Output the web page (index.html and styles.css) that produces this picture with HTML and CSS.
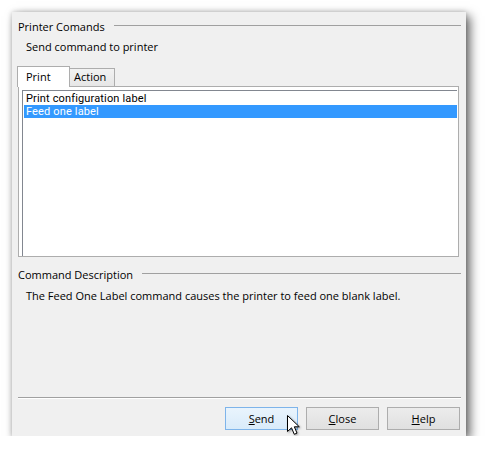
FILE: index.html
```html
<!DOCTYPE html>
<html lang="en">
<head>
<meta charset="utf-8">
<title>Printer Comands</title>
<link rel="stylesheet" href="styles.css">
</head>
<body>
<div class="window">
  <div class="group-title first"><span>Printer Comands</span><span class="rule"></span></div>
  <div class="subtitle">Send command to printer</div>
  <div class="tabs">
    <div class="tab-strip">
      <div class="tab active">Print</div>
      <div class="tab">Action</div>
    </div>
    <div class="tab-panel">
      <div class="listbox">
        <div class="item">Print configuration label</div>
        <div class="item selected">Feed one label</div>
      </div>
    </div>
  </div>
  <div class="group-title second"><span>Command Description</span><span class="rule"></span></div>
  <div class="desc">The Feed One Label command causes the printer to feed one blank label.</div>
  <div class="spacer"></div>
  <div class="separator"></div>
  <div class="buttons">
    <div class="btn default"><span><u>S</u>end</span>
      <svg class="cursor" width="14" height="21" viewBox="0 0 14 21"><path d="M0.5 0.5 L0.5 16.5 L4.5 12.8 L7.3 19.3 L10 18.1 L7.3 11.8 L12.3 11.8 Z" fill="#fff" stroke="#000" stroke-width="1" stroke-linejoin="miter"/></svg>
    </div>
    <div class="btn"><span><u>C</u>lose</span></div>
    <div class="btn"><span><u>H</u>elp</span></div>
  </div>
</div>
</body>
</html>
```
FILE: styles.css
```css
html, body {
  margin: 0;
  padding: 0;
  background: #ffffff;
}
body {
  font-family: "Open Sans", "Noto Sans", sans-serif;
  font-size: 11px;
  color: #000;
}
.window {
  box-sizing: border-box;
  margin: 12px 0 0 12px;
  width: 454px;
  height: 424px;
  background: #f0f0f0;
  padding: 7px 6px 6px 6px;
  display: flex;
  flex-direction: column;
  box-shadow: 0 0 5px rgba(0,0,0,0.18), 4px 4px 10px rgba(0,0,0,0.6);
}
.group-title {
  display: flex;
  align-items: center;
  height: 15px;
  line-height: 15px;
}
.group-title .rule {
  flex: 1;
  height: 1px;
  background: #a0a0a0;
  margin-left: 9px;
  margin-right: -1px;
  position: relative;
  top: -1px;
}
.group-title.second {
  margin-top: 10px;
}
.subtitle {
  margin-top: 5px;
  line-height: 15px;
  padding-left: 8px;
}
.tabs {
  margin-top: 12px;
}
.tab-strip {
  display: flex;
  align-items: flex-end;
  height: 20px;
}
.tab {
  box-sizing: border-box;
  height: 18px;
  width: 46px;
  border: 1px solid #adadad;
  border-bottom: none;
  background: linear-gradient(#f2f2f2, #e6e6e6);
  line-height: 16px;
  padding-left: 4px;
  margin-left: -1px;
}
.tab.active {
  position: relative;
  z-index: 1;
  height: 21px;
  width: 53px;
  margin-left: -1px;
  margin-bottom: -1px;
  background: #ffffff;
  padding-left: 8px;
  line-height: 19px;
}
.tab-panel {
  box-sizing: border-box;
  width: 441px;
  height: 171px;
  border: 1px solid #adadad;
  background: #ffffff;
  padding: 3px 1px 0 3px;
}
.listbox {
  box-sizing: border-box;
  height: 166px;
  border-top: 1px solid #828790;
  border-left: 1px solid #828790;
  padding: 1px 0 0 1px;
}
.item {
  height: 13px;
  line-height: 13px;
  padding-left: 2px;
  white-space: nowrap;
  font-family: Roboto, "Open Sans", sans-serif;
  font-size: 11px;
  letter-spacing: 0.15px;
}
.item.selected {
  background: #3399ff;
  color: #ffffff;
}
.desc {
  margin-top: 6px;
  line-height: 15px;
  padding-left: 8px;
}
.spacer {
  flex: 1;
}
.separator {
  height: 1px;
  background: #a0a0a0;
  border-bottom: 1px solid #ffffff;
  margin-right: -1px;
}
.buttons {
  margin-top: 8px;
  display: flex;
  justify-content: flex-end;
  gap: 8px;
}
.btn {
  box-sizing: border-box;
  width: 73px;
  height: 23px;
  border: 1px solid #adadad;
  background: linear-gradient(#ececec, #e0e0e0);
  display: flex;
  align-items: center;
  justify-content: center;
  line-height: 15px;
  position: relative;
}
.btn.default {
  border-color: #7eb4ea;
  background: linear-gradient(#e9f4fd, #d9ebfa);
}
.cursor {
  position: absolute;
  left: 61px;
  top: 7px;
  filter: drop-shadow(1px 1px 1px rgba(0,0,0,0.35));
}
```
